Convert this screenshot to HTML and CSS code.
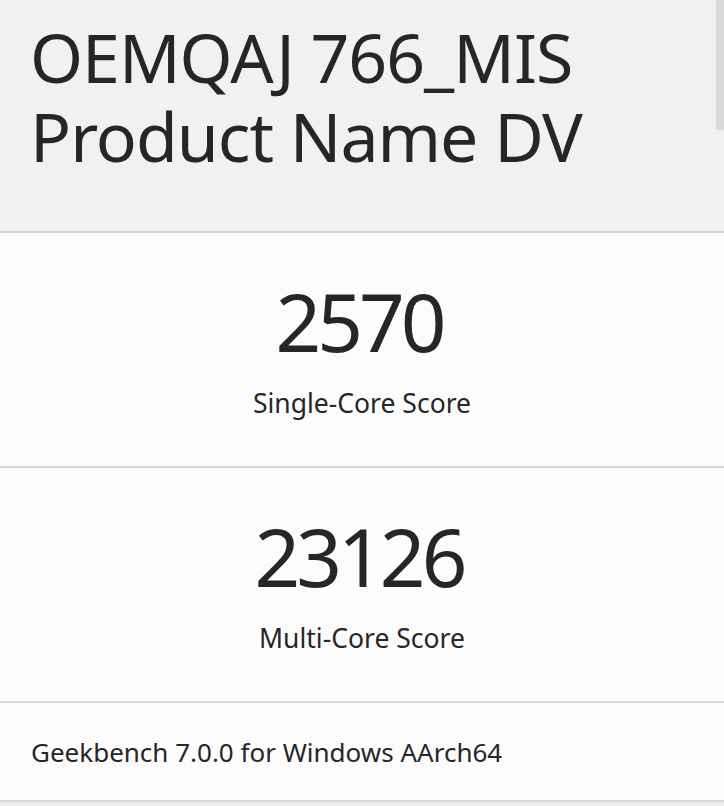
FILE: index.html
```html
<!DOCTYPE html>
<html>
<head>
<meta charset="utf-8">
<link rel="stylesheet" href="styles.css">
</head>
<body>
<div class="page">
  <header class="head">
    <h1 class="title"><span class="line">OEMQAJ 766_MIS</span><span class="line">Product Name DV</span></h1>
  </header>
  <section class="score">
    <div class="num">2570</div>
    <div class="label">Single-Core Score</div>
  </section>
  <section class="score">
    <div class="num">23126</div>
    <div class="label">Multi-Core Score</div>
  </section>
  <footer class="foot">Geekbench 7.0.0 for Windows AArch64</footer>
</div>
<div class="thumb"></div>
</body>
</html>
```
FILE: styles.css
```css
html, body {
  margin: 0;
  padding: 0;
  background: #efefef;
  font-family: "Noto Sans", "Liberation Sans", sans-serif;
  color: #262626;
}
.page {
  display: flex;
  flex-direction: column;
}
.head {
  background: #f1f1f1;
  height: 231px;
  border-bottom: 2px solid #d6d6d6;
  box-sizing: content-box;
  padding: 0 0 0 30px;
}
.title {
  margin: 0;
  padding-top: 17px;
  font-weight: 400;
  font-size: 68px;
  letter-spacing: -1px;
  display: flex;
  flex-direction: column;
}
.line {
  display: block;
  height: 79px;
  line-height: 79px;
  white-space: nowrap;
}
.score {
  background: #fcfcfc;
  height: 233px;
  border-bottom: 2px solid #d8d8d8;
  display: flex;
  flex-direction: column;
  align-items: center;
}
.num {
  font-size: 80px;
  line-height: 80px;
  letter-spacing: -4px;
  margin-top: 48px;
  margin-right: 6px;
}
.label {
  font-size: 26.5px;
  line-height: 30px;
  margin-top: 27px;
}
.foot {
  background: #fcfcfc;
  height: 97px;
  border-bottom: 2px solid #d8d8d8;
  display: flex;
  align-items: center;
  padding-left: 31px;
  font-size: 26px;
}
.thumb {
  position: absolute;
  top: 0;
  right: 0;
  width: 8px;
  height: 130px;
  background: #d9d9d9;
}
```
